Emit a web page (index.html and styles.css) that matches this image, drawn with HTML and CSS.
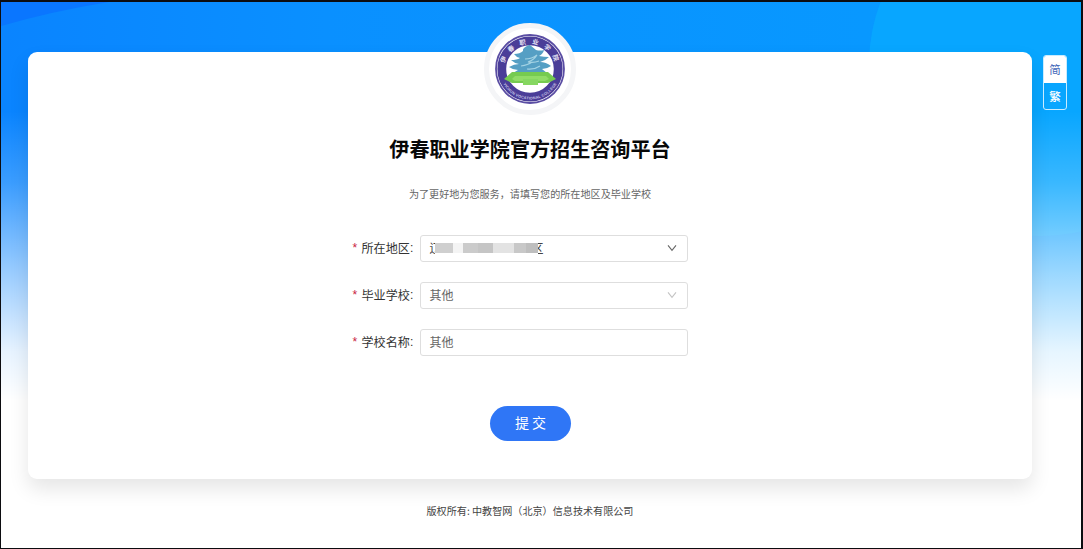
FILE: index.html
```
<!DOCTYPE html>
<html lang="zh-CN">
<head>
  <meta charset="UTF-8" />
  <title>伊春职业学院官方招生咨询平台</title>
  <meta name="viewport" content="width=device-width, initial-scale=1.0" />
  <link rel="stylesheet" href="styles.css">
</head>

<body>

  <div class="page">
    <svg class="page-bg" viewBox="0 0 1080 546" preserveAspectRatio="none" aria-hidden="true">
      <defs>
        <linearGradient id="sky" x1="0" y1="0" x2="1" y2="0">
          <stop offset="0" stop-color="#0a84ff" />
          <stop offset="0.3" stop-color="#0a90ff" />
          <stop offset="0.8" stop-color="#0898ff" />
          <stop offset="1" stop-color="#089fff" />
        </linearGradient>
        <linearGradient id="fade" x1="0" y1="0" x2="0" y2="1">
          <stop offset="0.2" stop-color="#fff" stop-opacity="0" />
          <stop offset="0.33" stop-color="#fff" stop-opacity="0.2" />
          <stop offset="0.5" stop-color="#fff" stop-opacity="0.6" />
          <stop offset="0.64" stop-color="#fff" stop-opacity="0.9" />
          <stop offset="0.73" stop-color="#fff" />
        </linearGradient>
      </defs>
      <rect width="1080" height="546" fill="url(#sky)" />
      <path d="M0 0H108Q52 9 0 24Z" fill="#0a76ff" />
      <circle cx="1040" cy="62" r="172" fill="#08a6ff" />
      <rect width="1080" height="546" fill="url(#fade)" />
    </svg>

    <main class="card">
      <div class="logo">
        <svg viewBox="0 0 72 72" role="img" aria-label="伊春职业学院">
          <defs>
            <path id="arcTop" d="M10 37a26 26 0 0 1 52 0" />
            <path id="arcBottom" d="M5.5 36a30.5 30.5 0 0 0 61 0" />
          </defs>
          <circle cx="36" cy="36" r="34" fill="#fff" stroke="#5a4da3" stroke-width="1.8" />
          <circle cx="36" cy="36" r="28.2" fill="#fff" stroke="#4a3d98" stroke-width="8.8" />
          <text class="logo-name"><textPath href="#arcTop" startOffset="52%" text-anchor="middle">伊春职业学院</textPath></text>
          <text class="logo-latin"><textPath href="#arcBottom" startOffset="50%" text-anchor="middle">YICHUN VOCATIONAL COLLEGE</textPath></text>
          <path d="M36 12l6 5q4 1 8 0-1 4-5 6 5 1 10 1-4 4-9 5 6 0 11 4-4 3-9 3l5 4H19l5-3q-5 0-9-3 5-3 10-3-5-1-8-4 6 0 9-2-4-1-6-4 6 0 9-3-1-3 6-6z" fill="#559fc4" />
          <path d="M31 26q7 0 12-4-3 5-9 7 6 1 11-1M27 33q7-1 11-4M33 36q7 1 13-3" fill="none" stroke="#a4d3e4" stroke-width="1.2" />
          <path d="M10 46l8-7h36l8 7-8 4H18z" fill="#76cb50" />
          <path d="M18 46l3-3h31l3 3-4 2H21z" fill="#91dc67" />
          <path d="M29 46h15v6H29z" fill="#86d761" />
        </svg>
      </div>

      <h1 class="title">伊春职业学院官方招生咨询平台</h1>
      <p class="subtitle">为了更好地为您服务，请填写您的所在地区及毕业学校</p>

      <form class="form">
        <div class="form-row">
          <label class="label"><span class="required">*</span>所在地区<span class="colon">:</span></label>
          <div class="field">
            <span class="region"><span>辽</span><span>区</span><span class="mosaic"></span></span>
            <svg class="arrow" viewBox="0 0 10 8" aria-hidden="true"><path d="M1 1.3l4 5 4-5" /></svg>
          </div>
        </div>
        <div class="form-row">
          <label class="label"><span class="required">*</span>毕业学校<span class="colon">:</span></label>
          <div class="field">
            <span class="value">其他</span>
            <svg class="arrow light" viewBox="0 0 10 8" aria-hidden="true"><path d="M1 1.3l4 5 4-5" /></svg>
          </div>
        </div>
        <div class="form-row">
          <label class="label"><span class="required">*</span>学校名称<span class="colon">:</span></label>
          <div class="field">
            <span class="value">其他</span>
          </div>
        </div>
        <button class="submit" type="button">提 交</button>
      </form>
    </main>

    <div class="lang">
      <span class="lang-item active">简</span>
      <span class="lang-item">繁</span>
    </div>

    <footer class="footer">版权所有: 中教智网（北京）信息技术有限公司</footer>
  </div>

</body>
</html>
```
FILE: styles.css
```
* {
  box-sizing: border-box;
  margin: 0;
  padding: 0;
}

body {
  font-family: "Noto Sans CJK SC", "Liberation Sans", sans-serif;
  color: #333;
  height: 100vh;
  overflow: hidden;
}

.page {
  position: relative;
  height: 549px;
  padding: 50px 49px 0 27px;
  border: solid #0c0c10;
  border-width: 2px 2px 1px 1px;
  background: #fff;
}

.page-bg {
  position: absolute;
  top: 0;
  left: 0;
  width: 100%;
  height: 100%;
}

.card {
  position: relative;
  display: flex;
  flex-direction: column;
  align-items: center;
  height: 427px;
  border-radius: 9px;
  background: #fff;
  box-shadow: 0 10px 20px rgba(0, 0, 0, 0.1);
}

/* School badge, hangs over the top edge of the card */
.logo {
  width: 92px;
  height: 92px;
  margin-top: -29px;
  display: flex;
  align-items: center;
  justify-content: center;
  border: 5px solid #f4f5f7;
  border-radius: 50%;
  background: #fff;
  flex-shrink: 0;
}
.logo svg {
  width: 72px;
  height: 72px;
}
.logo-name {
  font-size: 6.4px;
  font-weight: 700;
  letter-spacing: 5.6px;
  fill: #e6e2f4;
}
.logo-latin {
  font-family: "Liberation Sans", sans-serif;
  font-size: 3.8px;
  font-weight: 700;
  letter-spacing: 0.2px;
  fill: #c9c3e6;
}

.title {
  margin-top: 19px;
  font-size: 20.1px;
  font-weight: 700;
  line-height: 30px;
  color: #080808;
}

.subtitle {
  margin-top: 22px;
  font-size: 10.1px;
  line-height: 16px;
  color: #666;
}

.form {
  width: 336px;
  margin-top: 33px;
  margin-right: 21px;
  display: flex;
  flex-direction: column;
  gap: 20px;
}

.form-row {
  display: flex;
  align-items: center;
  height: 27px;
}

.label {
  width: 68px;
  display: flex;
  align-items: center;
  margin-top: -2px;
  padding-left: 1px;
  font-size: 12.1px;
  line-height: 18px;
  color: #333;
}
.required {
  width: 9px;
  font-family: "Liberation Sans", sans-serif;
  color: #c9223f;
}
.colon {
  font-family: "Liberation Sans", sans-serif;
}

.field {
  flex: 1;
  height: 27px;
  display: flex;
  align-items: center;
  justify-content: space-between;
  padding: 0 10px 2px 9px;
  border: 1px solid #dedede;
  border-radius: 3px;
  font-size: 12px;
  line-height: 18px;
  color: #666;
}

/* Region value with the middle part masked out */
.region {
  position: relative;
  width: 114px;
  display: flex;
  justify-content: space-between;
  color: #444;
}
.mosaic {
  position: absolute;
  top: 3px;
  left: 5px;
  width: 103px;
  height: 12px;
  border: solid #fff;
  border-width: 1px 0;
  background: linear-gradient(90deg, #cfcfcf 0 18px, #f4f4f4 18px 28px, #cbcbcb 28px 43px, #c5c5c5 43px 58px, #e3e3e3 58px 79px, #c8c8c8 79px 91px, #bebebe 91px);
}

.arrow {
  width: 10px;
  height: 8px;
  fill: none;
  stroke: #666;
  stroke-width: 1.1;
}
.light {
  stroke: #c4c4c4;
}

.submit {
  align-self: center;
  width: 81px;
  height: 35px;
  margin: 30px 0 0 22px;
  padding-bottom: 2px;
  border: none;
  border-radius: 18px;
  background: #2f76f6;
  font-family: inherit;
  font-size: 14px;
  line-height: 33px;
  color: #fff;
  cursor: pointer;
}

/* Simplified / traditional switch */
.lang {
  position: absolute;
  top: 53px;
  right: 14px;
  width: 24px;
  height: 55px;
  display: flex;
  flex-direction: column;
  border: 1px solid #c9ecff;
  border-radius: 3px;
  overflow: hidden;
}
.lang-item {
  flex: 1;
  display: flex;
  align-items: center;
  justify-content: center;
  font-size: 11.5px;
  line-height: 16px;
  font-weight: 500;
  color: #fff;
}
.active {
  background: #fff;
  font-weight: 400;
  color: #3f66b8;
}

.footer {
  position: relative;
  margin-top: 24px;
  text-align: center;
  font-size: 10.1px;
  line-height: 16px;
  color: #444;
}
```
